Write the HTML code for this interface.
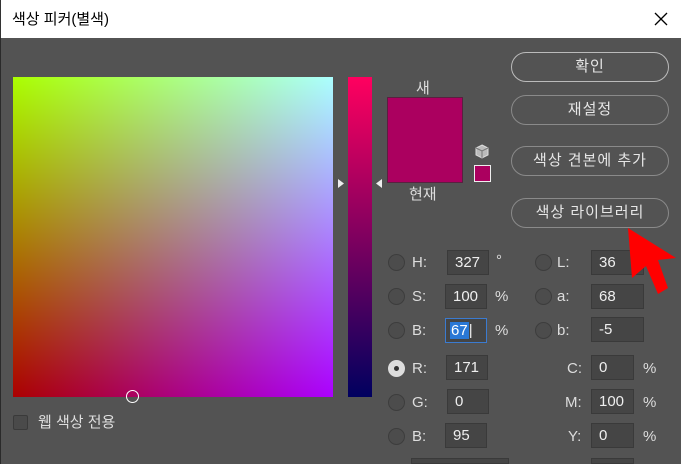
<!DOCTYPE html>
<html style="width:681px;height:464px;overflow:hidden"><head><meta charset="utf-8"><style>
*{margin:0;padding:0;box-sizing:border-box}
body{width:681px;height:464px;overflow:hidden;background:#535353;font-family:"Liberation Sans","Noto Sans CJK KR",sans-serif;position:relative;color:#ddd}
.a{position:absolute}
.title{left:0;top:0;width:681px;height:38px;background:#fff;color:#000;font-size:15px;border-left:1px solid #333}
.btn{position:absolute;left:511px;width:158px;height:30px;border:1px solid #8a8a8a;border-radius:15px;text-align:center;line-height:28px;font-size:15px;color:#e6e6e6;letter-spacing:1px}
.in{position:absolute;height:25px;background:#454545;border:1px solid #3a3a3a;font-size:15px;line-height:23px;padding-left:7px;color:#eee}
.lb{position:absolute;font-size:15px;color:#ddd}
.rd{position:absolute;width:17px;height:17px;border-radius:50%;border:1px solid #3d3d3d;background:#4c4c4c}
</style></head><body>
<div class="a title"><div class="a" style="left:11px;top:8px">색상 피커(별색)</div>
<svg class="a" style="left:653px;top:12px" width="14" height="14"><path d="M1 1L13 13M13 1L1 13" stroke="#000" stroke-width="1.3"/></svg></div>
<div class="a" style="left:0;top:38px;width:1px;height:426px;background:#2a2a2a"></div>
<div class="a" style="left:13px;top:77px;width:320px;height:320px;background:rgb(171,0,0)">
<div class="a" style="inset:0;background:linear-gradient(to right,#000,#00f);mix-blend-mode:screen"></div>
<div class="a" style="inset:0;background:linear-gradient(to bottom,#0f0,#000);mix-blend-mode:screen"></div>
</div>
<div class="a" style="left:126px;top:390px;width:13px;height:13px;border-radius:50%;border:1px solid #fff"></div>
<div class="a" style="left:348px;top:77px;width:24px;height:320px;background:linear-gradient(#ff005f,#00005f)"></div>
<svg class="a" style="left:337px;top:178px" width="46" height="11"><path d="M1 1L7 5.5L1 10Z" fill="#eee"/><path d="M45 1L39 5.5L45 10Z" fill="#eee"/></svg>
<div class="a" style="left:13px;top:415px;width:15px;height:15px;border:1px solid #3a3a3a;background:#4a4a4a;border-radius:2px"></div>
<div class="lb" style="left:38px;top:411px;font-size:15px">웹 색상 전용</div>
<div class="lb" style="left:416px;top:77px">새</div>
<div class="a" style="left:387px;top:97px;width:76px;height:86px;background:#ab005f;border:1px solid #5a2040"></div>
<div class="lb" style="left:409px;top:183px">현재</div>
<svg class="a" style="left:474px;top:144px" width="16" height="16"><path d="M8 1L14 4V11L8 14L2 11V4Z" fill="#bbb" stroke="#ddd"/><path d="M2 4L8 7L14 4M8 7V14" stroke="#777" fill="none"/></svg>
<div class="a" style="left:474px;top:165px;width:17px;height:17px;border:1px solid #eee;background:#ab005f"></div>
<div class="btn" style="top:52px;border-color:#bbb">확인</div>
<div class="btn" style="top:95px">재설정</div>
<div class="btn" style="top:146px">색상 견본에 추가</div>
<div class="btn" style="top:198px">색상 라이브러리</div>

<div class="rd" style="left:388px;top:254px"></div><div class="lb" style="left:412px;top:254px">H:</div><div class="in" style="left:447px;top:250px;width:42px">327</div><div class="lb" style="left:496px;top:252px">°</div>
<div class="rd" style="left:388px;top:288px"></div><div class="lb" style="left:412px;top:288px">S:</div><div class="in" style="left:445px;top:284px;width:42px">100</div><div class="lb" style="left:495px;top:288px">%</div>
<div class="rd" style="left:388px;top:322px"></div><div class="lb" style="left:412px;top:322px">B:</div><div class="in" style="left:445px;top:318px;width:42px;border-color:#3b7bd0;padding-left:4px"><span style="background:#2a78d6;color:#fff;padding:0 1px">67</span>|</div><div class="lb" style="left:495px;top:322px">%</div>
<div class="rd" style="left:388px;top:360px;background:#ddd;border-color:#ddd"><div class="a" style="left:5px;top:5px;width:5px;height:5px;border-radius:50%;background:#333"></div></div><div class="lb" style="left:412px;top:360px">R:</div><div class="in" style="left:446px;top:355px;width:42px">171</div>
<div class="rd" style="left:388px;top:394px"></div><div class="lb" style="left:412px;top:394px">G:</div><div class="in" style="left:447px;top:389px;width:42px">0</div>
<div class="rd" style="left:388px;top:428px"></div><div class="lb" style="left:412px;top:428px">B:</div><div class="in" style="left:445px;top:423px;width:42px">95</div>
<div class="rd" style="left:535px;top:254px"></div><div class="lb" style="left:557px;top:254px">L:</div><div class="in" style="left:591px;top:250px;width:53px">36</div>
<div class="rd" style="left:535px;top:288px"></div><div class="lb" style="left:557px;top:288px">a:</div><div class="in" style="left:591px;top:284px;width:53px">68</div>
<div class="rd" style="left:535px;top:322px"></div><div class="lb" style="left:557px;top:322px">b:</div><div class="in" style="left:591px;top:317px;width:53px">-5</div>
<div class="lb" style="left:567px;top:360px">C:</div><div class="in" style="left:591px;top:355px;width:43px">0</div><div class="lb" style="left:643px;top:360px">%</div>
<div class="lb" style="left:565px;top:394px">M:</div><div class="in" style="left:591px;top:389px;width:43px">100</div><div class="lb" style="left:643px;top:394px">%</div>
<div class="lb" style="left:568px;top:428px">Y:</div><div class="in" style="left:591px;top:423px;width:43px">0</div><div class="lb" style="left:643px;top:428px">%</div>
<div class="in" style="left:411px;top:458px;width:98px;height:6px"></div><div class="in" style="left:591px;top:458px;width:43px;height:6px"></div>
<svg class="a" style="left:620px;top:222px" width="60" height="84"><path d="M8 6L12 56L26 44L38 72L48 66L38 38L56 36Z" fill="#f00"/></svg>
</body></html>
